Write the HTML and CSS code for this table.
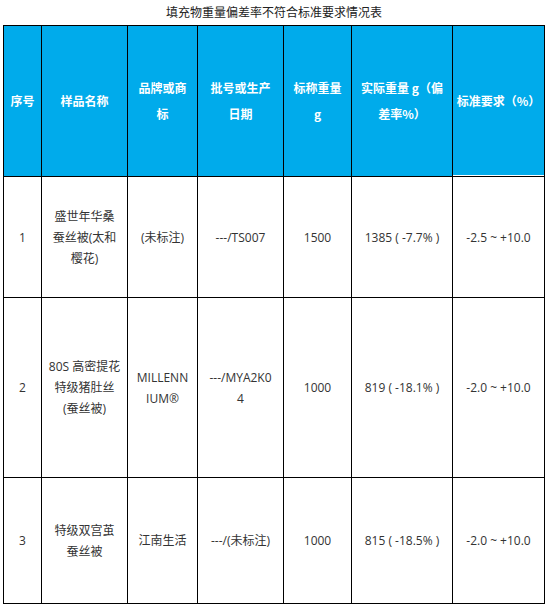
FILE: index.html
```html
<!DOCTYPE html>
<html lang="zh-CN">
<head>
<meta charset="utf-8">
<title>填充物重量偏差率不符合标准要求情况表</title>
<link rel="stylesheet" href="styles.css">
</head>
<body>
<div class="page">
  <p class="title">填充物重量偏差率不符合标准要求情况表</p>
  <table class="sheet">
    <colgroup>
      <col class="c1"><col class="c2"><col class="c3"><col class="c4"><col class="c5"><col class="c6"><col class="c7">
    </colgroup>
    <thead>
      <tr class="head">
        <th>序号</th>
        <th>样品名称</th>
        <th>品牌或商<br>标</th>
        <th>批号或生产<br>日期</th>
        <th>标称重量<br>g</th>
        <th>实际重量 g（偏<br>差率%）</th>
        <th class="last">标准要求（%）</th>
      </tr>
    </thead>
    <tbody>
      <tr class="r1">
        <td>1</td>
        <td>盛世年华桑<br>蚕丝被(太和<br>樱花)</td>
        <td>(未标注)</td>
        <td>---/TS007</td>
        <td>1500</td>
        <td>1385 ( -7.7% )</td>
        <td>-2.5 ~ +10.0</td>
      </tr>
      <tr class="r2">
        <td>2</td>
        <td>80S 高密提花<br>特级猪肚丝<br>(蚕丝被)</td>
        <td>MILLENN<br>IUM®</td>
        <td>---/MYA2K0<br>4</td>
        <td>1000</td>
        <td>819 ( -18.1% )</td>
        <td>-2.0 ~ +10.0</td>
      </tr>
      <tr class="r3">
        <td>3</td>
        <td>特级双宫茧<br>蚕丝被</td>
        <td>江南生活</td>
        <td>---/(未标注)</td>
        <td>1000</td>
        <td>815 ( -18.5% )</td>
        <td>-2.0 ~ +10.0</td>
      </tr>
    </tbody>
  </table>
</div>
</body>
</html>
```

FILE: styles.css
```css
html, body {
  margin: 0;
  padding: 0;
  background: #ffffff;
}

body {
  font-family: "Noto Sans CJK SC", "Noto Sans", sans-serif;
  color: #333333;
}

.page {
  padding: 5px 0 0 3px;
}

.title {
  margin: 0 0 7px 0;
  width: 542px;
  text-align: center;
  font-size: 12px;
  line-height: 13px;
  color: #222222;
}

.sheet {
  border-collapse: collapse;
  table-layout: fixed;
  width: 542px;
}

.c1 { width: 38px; }
.c2 { width: 86px; }
.c3 { width: 70px; }
.c4 { width: 86px; }
.c5 { width: 68px; }
.c6 { width: 101px; }
.c7 { width: 92px; }

.sheet th,
.sheet td {
  border: 1px solid #000000;
  padding: 0 2px;
  text-align: center;
  vertical-align: middle;
  font-size: 12px;
}

.sheet th {
  background: #00abeb;
  color: #ffffff;
  font-weight: bold;
  line-height: 26px;
}

.sheet th.last {
  box-shadow: inset 0 -1px 0 #ffffff;
}

.sheet td {
  font-family: "Open Sans", "Noto Sans CJK SC", sans-serif;
  line-height: 21px;
  color: #333333;
}

.head { height: 151px; }
.r1 { height: 121px; }
.r2 { height: 180px; }
.r3 { height: 126px; }
```
